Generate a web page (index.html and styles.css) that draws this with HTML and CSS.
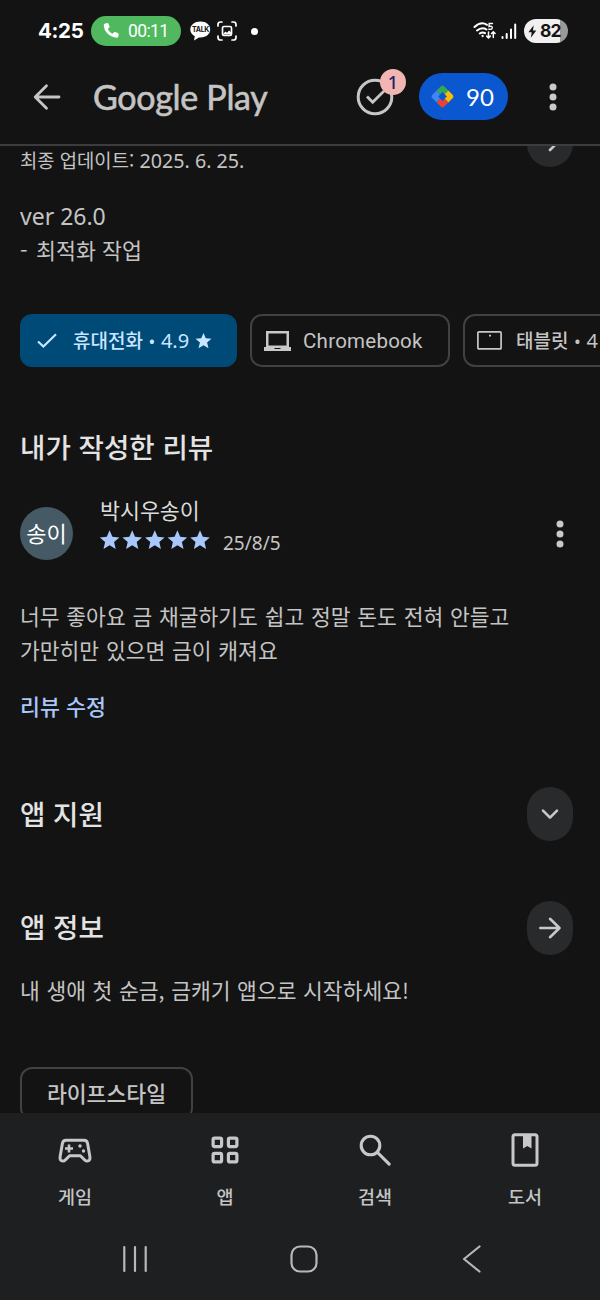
FILE: index.html
```html
<!DOCTYPE html>
<html lang="ko">
<head>
<meta charset="utf-8">
<title>Google Play</title>
<link rel="stylesheet" href="styles.css">
</head>
<body>
<div class="app">
  <header class="status">
    <span class="clock">4:25</span>
    <span class="call">
      <svg class="call-icon" viewBox="0 0 18 18"><path d="M3.3 1.6 5.5 1q.7 0 1 .7l1 2.8q.2.7-.4 1.200L5.700 7.100q1.500 3 4.700 4.700l1.700-1.600q.500-.500 1.200-.200l2.800 1.200q.700.400.600 1.100l-.400 2.200q-.300 1.200-1.500 1.200Q9 15.300 5.200 11.300 2 8 1.700 3.200q.1-1.300 1.600-1.600Z" fill="#fff"/></svg>
      <span class="call-time">00:11</span>
    </span>
    <span class="talk">
      <svg viewBox="0 0 21 20"><path d="M10.500.5C4.800.5.300 4 .300 8.500c0 3 1.900 5.400 4.500 6.800L4 19.500l5-3.100c6.400.6 11.200-3 11.200-7.900C20.200 4 16.200.5 10.500.5Z" fill="#fff"/></svg>
      <b class="talk-text">TALK</b>
    </span>
    <svg class="shot" viewBox="0 0 20 20" fill="none" stroke="#fff" stroke-width="1.700" stroke-linecap="round"><path d="M1 5V3.500Q1 1 3.500 1H5M15 1h1.500Q19 1 19 3.500V5M19 15v1.500q0 2.500-2.500 2.500H15M5 19H3.500Q1 19 1 16.500V15"/><rect x="5.500" y="5.500" width="9" height="9" rx="1.500"/><path d="m6 13 2.500-2.500 1.500 1.200 2-2.200 2.300 2v2H6Z" fill="#fff" stroke="none"/></svg>
    <span class="notice-dot"></span>
    <span class="status-right">
      <svg class="wifi" viewBox="0 0 24 18" fill="none" stroke="#fff" stroke-width="2" stroke-linecap="round"><path d="M1.500 5Q8-1 14 2.800M4 8.500q5-4 9.500-1M6.800 11.500Q9.500 9.500 12 11.200"/><circle cx="9.500" cy="14" r=".7" fill="#fff" stroke-width="1"/><path d="M19.500 1.500h-3.300L16 4.500q3.200-.8 3.300 1.300-.1 2-3.500 1.400" stroke-width="1.400"/><path d="M15.500 10v5.800m-1.800-1.700 1.800 1.800 1.800-1.800M20.300 15.500V9.800m-1.800 1.700 1.800-1.800 1.800 1.800" stroke-width="1.500"/></svg>
      <svg class="signal" viewBox="0 0 16 17" stroke="#fff" stroke-width="2" stroke-linecap="round"><path d="M1.500 14v1M5.700 11v4M10 6.500V15M14.200 1.500V15"/></svg>
      <span class="battery"><svg viewBox="0 0 10 14"><path d="M6.300 0 .500 7.800h3.600L3.200 14l6-8H5.500Z" fill="#151515"/></svg>82</span>
    </span>
  </header>

  <div class="toolbar">
    <svg class="back" viewBox="0 0 28 28" fill="none" stroke="#c6c6c6" stroke-width="2.800" stroke-linecap="round" stroke-linejoin="round"><path d="M26 14H2.500M13.500 2.800 2.200 14l11.300 11.200"/></svg>
    <h1 class="brand">Google Play</h1>
    <div class="tasks">
      <svg viewBox="0 0 38 38" fill="none" stroke="#c6c6c6" stroke-width="3"><circle cx="19" cy="19" r="16.800"/><path d="m11 18.500 5.700 5.700L28 13" stroke-width="2.800"/></svg>
      <span class="badge">1</span>
    </div>
    <div class="points">
      <svg viewBox="0 0 24 24"><g transform="rotate(45 12 12)"><path d="M4 6q0-2 2-2h6v5H9v3H4Z" fill="#4285f4" transform="rotate(-90 12 12)"/><path d="M4 6q0-2 2-2h6v5H9v3H4Z" fill="#34a853"/><path d="M4 6q0-2 2-2h6v5H9v3H4Z" fill="#fbbc04" transform="rotate(90 12 12)"/><path d="M4 6q0-2 2-2h6v5H9v3H4Z" fill="#ea4335" transform="rotate(180 12 12)"/></g></svg>
      <span>90</span>
    </div>
    <svg class="more" viewBox="0 0 8 28" fill="#c9c9c9"><circle cx="4" cy="4" r="3.500"/><circle cx="4" cy="14" r="3.500"/><circle cx="4" cy="24" r="3.500"/></svg>
  </div>

  <main class="content">
    <div class="updated">
      <span class="updated-text">최종 업데이트: <span class="day">2025. 6. 25.</span></span>
      <span class="round round-cut"><svg viewBox="0 0 24 24"><path d="M1 12h20M12 2l10 10-10 10"/></svg></span>
    </div>
    <p class="notes"><span class="version">ver 26.0</span><br><span class="dash">-</span>최적화 작업</p>

    <div class="chips">
      <div class="chip chip-on">
        <svg class="check" viewBox="0 0 20 15" fill="none" stroke="#c8e6ff" stroke-width="2.200"><path d="m1 8.500 5.400 5L19 1.300"/></svg>
        <span class="chip-ko">휴대전화</span><span class="sep">•</span><span class="score">4.9</span>
        <svg class="chip-star" viewBox="0 0 18 17"><path d="m9 0 2.400 5.700 6.100.5-4.700 4 1.500 6.100L9 13l-5.300 3.300 1.500-6.100-4.700-4 6.100-.5Z" fill="#c8e6ff"/></svg>
      </div>
      <div class="chip chip-book">
        <svg class="laptop" viewBox="0 0 27 20"><path d="M2 0h23v16h2v4H0v-4h2Zm2.500 2.500v12h18v-12Zm6 14.500v1h6v-1Z" fill="#c8c8c8" fill-rule="evenodd"/></svg>
        <span class="chip-en">Chromebook</span>
      </div>
      <div class="chip chip-tablet">
        <svg class="tablet" viewBox="0 0 25 19" fill="none" stroke="#c8c8c8" stroke-width="1.700"><rect x=".9" y=".9" width="23.200" height="17" rx="1"/><path d="M12 4.700h2"/></svg>
        <span class="chip-ko">태블릿</span><span class="sep">•</span><span class="score">4</span>
      </div>
    </div>

    <h2 class="mine">내가 작성한 리뷰</h2>
    <section class="reviewer">
      <span class="avatar">송이</span>
      <div class="who">
        <span class="name">박시우송이</span>
        <div class="rating">
          <svg class="stars" viewBox="0 0 110 20" fill="#a8c7fa"><defs><path id="star" d="m9.600.2 2.800 6.600 7 .6-5.300 4.600 1.600 7-6.100-3.700L3.500 19l1.600-7L-.200 7.400l7-.6Z"/></defs><use href="#star"/><use href="#star" x="22.600"/><use href="#star" x="45.200"/><use href="#star" x="67.800"/><use href="#star" x="90.400"/></svg>
          <span class="date">25/8/5</span>
        </div>
      </div>
      <svg class="more" viewBox="0 0 8 28" fill="#c9c9c9"><circle cx="4" cy="4" r="3.500"/><circle cx="4" cy="14" r="3.500"/><circle cx="4" cy="24" r="3.500"/></svg>
    </section>
    <p class="review">너무 좋아요 금 채굴하기도 쉽고 정말 돈도 전혀 안들고<br>가만히만 있으면 금이 캐져요</p>
    <a class="edit">리뷰 수정</a>

    <section class="row"><h2>앱 지원</h2><span class="round"><svg viewBox="0 0 24 24"><path d="m5 8.700 7 7 7-7"/></svg></span></section>
    <section class="row row-info"><h2>앱 정보</h2><span class="round"><svg viewBox="0 0 24 24"><path d="M2.300 12h19M12 2.800l9.500 9.200-9.500 9.200"/></svg></span></section>
    <p class="about">내 생애 첫 순금, 금캐기 앱으로 시작하세요!</p>
    <div class="category">라이프스타일</div>
  </main>

  <nav class="bottom">
    <div class="tabs">
      <div class="tab"><svg viewBox="0 0 36 36" fill="none" stroke="#c8c8c8" stroke-width="3" stroke-linejoin="round"><path d="M9 8.300h18q3 0 3.600 3.200l2.300 13.300q.5 4.300-2.700 4.300-1.400 0-2.500-1.100l-4.300-4.300H12.600L8.300 28q-1.100 1.100-2.500 1.100-3.200 0-2.700-4.300l2.300-13.300Q6 8.300 9 8.300Z"/><path d="M8 16.500h8M12 12.500v8" stroke-width="2.600"/><g fill="#c8c8c8" stroke="none"><circle cx="23" cy="14" r="1.700"/><circle cx="26.500" cy="19" r="1.700"/></g></svg><span>게임</span></div>
      <div class="tab"><svg viewBox="0 0 36 36" fill="none" stroke="#c8c8c8" stroke-width="3.200"><rect x="6.100" y="6.100" width="8.500" height="8.500" rx="1.500"/><rect x="21.400" y="6.100" width="8.500" height="8.500" rx="1.500"/><rect x="6.100" y="21.400" width="8.500" height="8.500" rx="1.500"/><rect x="21.400" y="21.400" width="8.500" height="8.500" rx="1.500"/></svg><span>앱</span></div>
      <div class="tab"><svg viewBox="0 0 36 36" fill="none" stroke="#c8c8c8" stroke-width="3.100" stroke-linecap="round"><circle cx="13.500" cy="13.500" r="9.300"/><path d="m20.500 20.500 11.700 11.700"/></svg><span>검색</span></div>
      <div class="tab"><svg viewBox="0 0 36 36" fill="none" stroke="#c8c8c8" stroke-width="3"><rect x="6" y="2.800" width="24" height="30.400" rx="2"/><path d="M16 2.500h8.500v14L20.300 14 16 16.500Z" fill="#c8c8c8" stroke="none"/></svg><span>도서</span></div>
    </div>
    <div class="system">
      <svg viewBox="0 0 28 28"><path d="M3.300 2v24M14 2v24M24.700 2v24"/></svg>
      <svg viewBox="0 0 28 28"><rect x="1.500" y="1.500" width="25" height="25" rx="8.500"/></svg>
      <svg viewBox="0 0 28 28"><path d="M21.500 1.500 6 14l15.500 12.500"/></svg>
    </div>
  </nav>
</div>
</body>
</html>
```
FILE: styles.css
```css
* { box-sizing: border-box; }
body { margin: 0; background: #131313; }
h1, h2, p { margin: 0; font-weight: 400; }
svg { display: block; flex: none; }
.app {
  width: 600px; height: 1300px; overflow: hidden;
  display: flex; flex-direction: column;
  background: #131313; color: #c4c4c4;
  font-family: "Noto Sans CJK KR", sans-serif;
  white-space: nowrap;
}

.status { flex: none; height: 62px; display: flex; align-items: center; padding: 0 32px 0 38px; color: #fff; }
.clock { width: 53px; font: 700 20.500px/30px Inter, sans-serif; letter-spacing: -.3px; }
.call { width: 90px; height: 30px; border-radius: 15px; background: #50b95f; display: flex; align-items: center; gap: 8px; padding-left: 11px; }
.call-icon { width: 18px; height: 18px; }
.call-time { font: 400 17.500px/30px Roboto, sans-serif; letter-spacing: -.6px; }
.talk { position: relative; margin-left: 9px; }
.talk svg { width: 21px; height: 20px; }
.talk-text { position: absolute; inset: 0; text-align: center; font: 700 7px/17px Inter, sans-serif; letter-spacing: -.3px; color: #151515; }
.shot { width: 20px; height: 20px; margin-left: 6px; }
.notice-dot { width: 7px; height: 7px; border-radius: 50%; background: #fff; margin-left: 14px; }
.status-right { margin-left: auto; display: flex; align-items: center; }
.wifi { width: 24px; height: 18px; }
.signal { width: 16px; height: 17px; margin-left: 4px; }
.battery { width: 44px; height: 24px; margin-left: 7px; border-radius: 12px; background: linear-gradient(90deg, #f0f0f0 82%, #999 82%); color: #151515; display: flex; align-items: center; padding-left: 4px; gap: 3px; font: 700 17.500px/24px Inter, sans-serif; letter-spacing: -1px; }
.battery svg { width: 9px; height: 13px; }

.toolbar { flex: none; height: 84px; display: flex; align-items: center; padding: 0 43px 13px 33px; border-bottom: 2px solid #3c3c3c; }
.back { width: 28px; height: 28px; }
.brand { width: 262px; padding-left: 32px; font: 400 34px/44px Lato, sans-serif; letter-spacing: -.3px; -webkit-text-stroke: .6px #c4c4c4; }
.tasks { position: relative; width: 38px; margin-left: 33px; }
.tasks svg { width: 38px; height: 38px; }
.badge { position: absolute; left: 24px; top: -9px; width: 26px; height: 26px; border-radius: 50%; background: #f3b5b3; color: #1a2166; text-align: center; font: 500 18px/26px "Noto Sans", sans-serif; }
.points { width: 89px; height: 47px; margin-left: 25px; border-radius: 24px; background: #0b57d0; color: #fff; display: flex; align-items: center; padding-left: 11px; gap: 11px; font: 400 24px/46px Lato, sans-serif; }
.points svg { width: 25px; height: 25px; }
.more { width: 8px; height: 28px; margin-left: auto; }

.content { flex: none; height: 967px; overflow: hidden; padding-left: 20px; }
.updated { height: 30px; display: flex; justify-content: space-between; padding-right: 27px; }
.updated-text { font-size: 18.800px; line-height: 28px; }
.day { font: 400 19.700px/24px "Noto Sans", sans-serif; }
.round { width: 46px; height: 54px; border-radius: 23px; background: #292a2c; display: grid; place-items: center; }
.round svg { width: 24px; height: 24px; fill: none; stroke: #c8c8c8; stroke-width: 2.600; stroke-linecap: round; stroke-linejoin: round; }
.round-cut { margin-top: -33px; }
.notes { margin-top: 23px; font-size: 21.700px; line-height: 34px; }
.version { font: 400 23px/30px "Noto Sans", sans-serif; }
.dash { display: inline-block; width: 16px; }

.chips { margin-top: 47px; display: flex; gap: 13px; }
.chip { flex: none; height: 53px; border: 2px solid #414141; border-radius: 12px; display: flex; align-items: center; font-size: 19px; }
.chip-on { width: 217px; background: #004a77; border-color: #004a77; color: #c8e6ff; padding-left: 15px; }
.chip-book { width: 200px; padding-left: 12px; }
.chip-tablet { width: 217px; padding-left: 12px; }
.chip-ko { font-weight: 500; padding-bottom: 2px; }
.sep { width: 18px; text-align: center; font: 18px/24px "Noto Sans", sans-serif; }
.score { font: 400 20px/24px "Noto Sans", sans-serif; }
.check { width: 20px; height: 15px; margin-right: 16px; }
.chip-star { width: 17px; height: 16px; margin-left: 6px; }
.laptop { width: 27px; height: 20px; margin-right: 12px; }
.chip-en { font: 400 20.500px/24px Roboto, sans-serif; letter-spacing: .25px; }
.tablet { width: 25px; height: 19px; margin-right: 14px; }

h2 { font-size: 27.600px; font-weight: 500; line-height: 40px; padding-bottom: 1px; color: #e3e3e3; }
.mine { margin-top: 59px; }
.reviewer { margin-top: 30px; height: 73px; display: flex; align-items: center; padding-right: 36px; }
.avatar { width: 53px; height: 53px; border-radius: 50%; background: #455a64; color: #fff; text-align: center; font-size: 22px; line-height: 51px; }
.who { height: 73px; margin-left: 27px; display: flex; flex-direction: column; }
.name { font-size: 21.700px; line-height: 25px; color: #dcdcdc; }
.rating { display: flex; align-items: center; gap: 13px; height: 36px; }
.stars { width: 110px; height: 20px; overflow: visible; }
.date { font: 400 19px/24px "Noto Sans", sans-serif; padding-top: 6px; }
.review { margin-top: 29px; font-size: 21.500px; line-height: 34px; word-spacing: .750px; }
.edit { display: block; margin-top: 22px; color: #a8c7fa; font-size: 21.700px; font-weight: 500; line-height: 34px; }
.row { display: flex; justify-content: space-between; align-items: center; height: 54px; padding-right: 27px; margin-top: 64px; }
.row h2 { padding-bottom: 3px; }
.row-info { margin-top: 59.500px; }
.about { margin-top: 18.500px; font-size: 21.500px; line-height: 34px; word-spacing: .6px; }
.category { margin-top: 60px; width: 173px; height: 53px; border: 2px solid #414141; border-radius: 12px; text-align: center; font-size: 21.600px; font-weight: 500; line-height: 47px; }

.bottom { flex: none; height: 187px; background: #1e1f21; }
.tabs { display: grid; grid-template-columns: repeat(4, 1fr); height: 113px; padding-top: 19px; }
.tab { display: flex; flex-direction: column; align-items: center; gap: 14px; font-size: 18.500px; font-weight: 500; line-height: 28px; }
.tab svg { width: 36px; height: 36px; }
.system { display: flex; gap: 140.500px; padding: 19px 0 0 121px; }
.system svg { width: 28px; height: 28px; fill: none; stroke: #b8b8b8; stroke-width: 2.200; stroke-linecap: round; stroke-linejoin: round; }
```
